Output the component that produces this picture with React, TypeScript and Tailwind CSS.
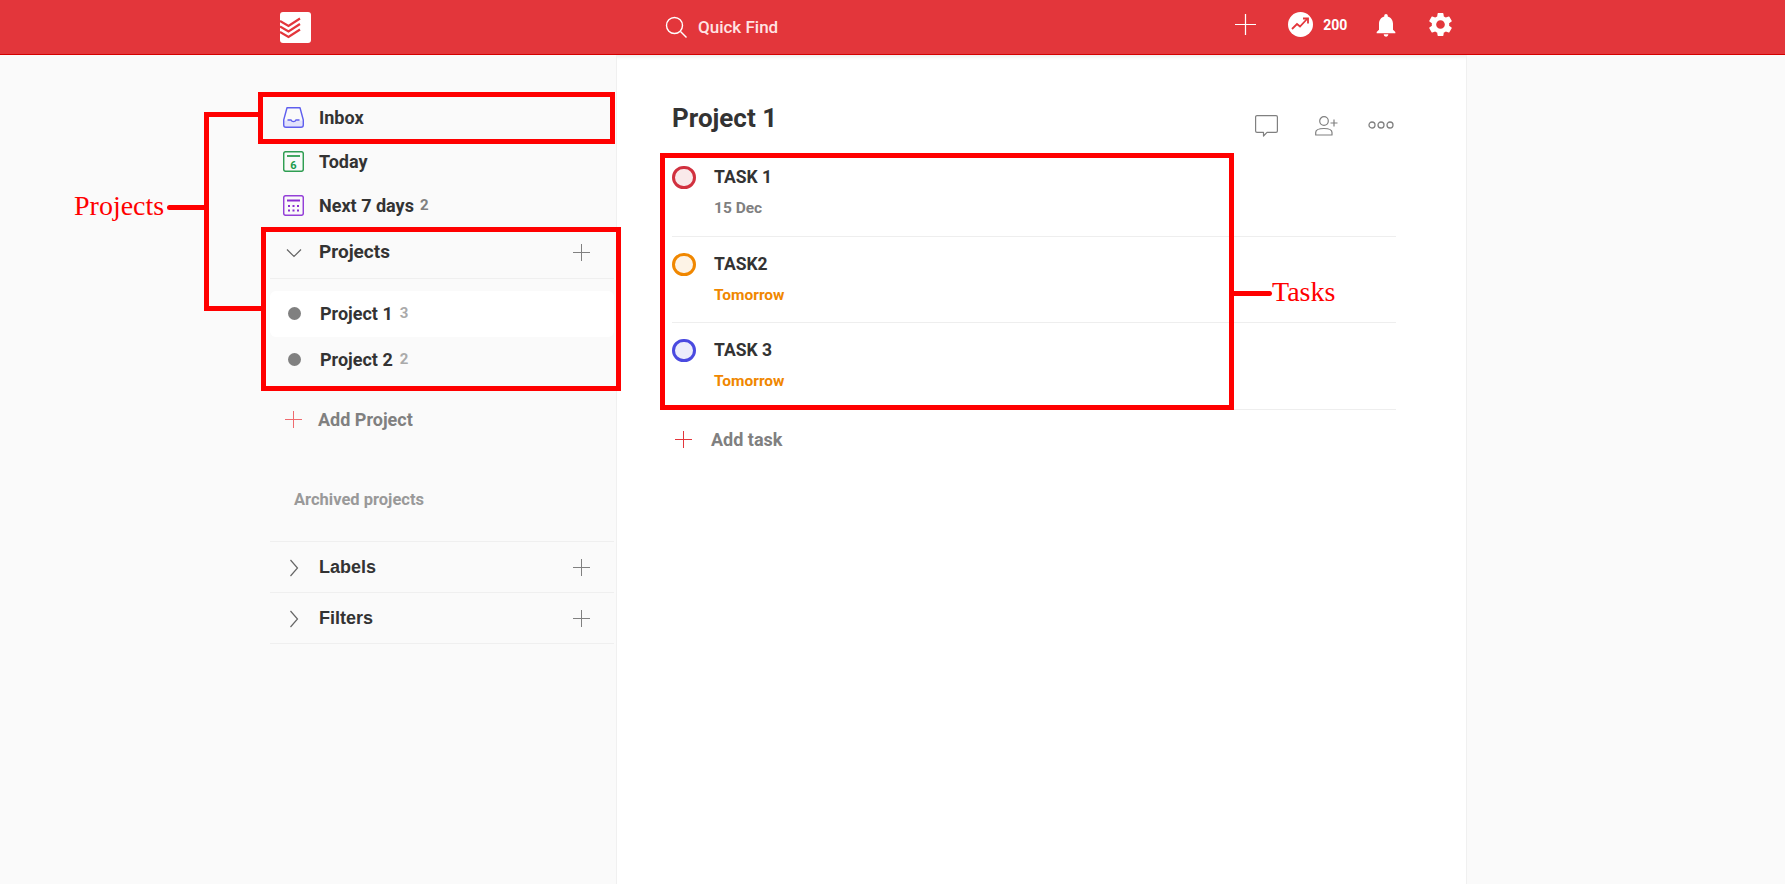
import React from 'react';
import { MdNotifications, MdSettings } from 'react-icons/md';

const Plus = ({ size = 17, color = '#808080' }: { size?: number; color?: string }) => (
  <svg width={size} height={size} viewBox="0 0 17 17" fill="none" stroke={color} strokeWidth="1">
    <path d="M8.5 0v17M0 8.5h17" />
  </svg>
);

const Chevron = ({ open }: { open?: boolean }) => (
  <svg width="18" height="18" viewBox="0 0 18 18" fill="none" stroke="#666" strokeWidth="1.2">
    {open ? <path d="M2 5.5l7 7 7-7" /> : <path d="M5.5 1l7 8-7 8" />}
  </svg>
);

const Logo = () => (
  <svg width="31" height="31" viewBox="0 0 31 31">
    <rect width="31" height="31" rx="3" fill="#fff" />
    <g fill="none" stroke="#e3363b" strokeWidth="2.2">
      <path d="M0 9l8.5 5L20 6.500" />
      <path d="M0 14.500l8.5 5L20 12" />
      <path d="M0 20l8.5 5L20 17.500" />
    </g>
  </svg>
);

const InboxIcon = () => (
  <svg width="21" height="21" viewBox="0 0 21 21" fill="none">
    <path d="M0.7 13.5h19.6v4.5a2.3 2.3 0 0 1-2.3 2.3H3a2.3 2.3 0 0 1-2.3-2.3z" fill="#e2e2fb" />
    <path d="M4 0.7h13l3.3 12.3v5a2.3 2.3 0 0 1-2.3 2.3H3a2.3 2.3 0 0 1-2.3-2.3v-5z" stroke="#5f5fee" strokeWidth="1.400" strokeLinejoin="round" />
    <path d="M4.500 13h3.500c1 2.200 4 2.200 5 0h3.500" stroke="#5f5fee" strokeWidth="1.400" />
  </svg>
);

const TodayIcon = () => (
  <svg width="21" height="21" viewBox="0 0 21 21" fill="none">
    <rect x="0.7" y="0.7" width="19.600" height="19.600" rx="2" stroke="#2f9e52" strokeWidth="1.500" />
    <path d="M4 5h13" stroke="#2f9e52" strokeWidth="1.800" />
    <text x="10.500" y="17.500" textAnchor="middle" fontSize="11" fontWeight="700" fontFamily="Roboto" fill="#1a9a4a">6</text>
  </svg>
);

const WeekIcon = () => (
  <svg width="21" height="21" viewBox="0 0 21 21" fill="none">
    <rect x="0.7" y="0.7" width="19.600" height="19.600" rx="2" stroke="#9440d8" strokeWidth="1.500" />
    <path d="M4 5.500h13" stroke="#8a2fd0" strokeWidth="2" />
    <g fill="#8a2fd0">
      {[5, 9.500, 14].map((x) => [10, 14.500].map((y) => <rect key={`${x}-${y}`} x={x} y={y} width="2" height="2" />))}
    </g>
  </svg>
);

const NavRow = ({ icon, label, count }: { icon: React.ReactNode; label: string; count?: number }) => (
  <div className="flex h-[44px] items-center pl-[283px]">
    <span className="flex w-[36px]">{icon}</span>
    <span className="text-[18px] font-bold text-[#333]">{label}</span>
    {count !== undefined && <span className="ml-[6px] text-[15px] font-bold text-[#808080]">{count}</span>}
  </div>
);

const ProjectRow = ({ label, count, active }: { label: string; count: number; active?: boolean }) => (
  <div className={`flex h-[46px] items-center rounded-md pb-[2px] pl-[18px] ${active ? 'bg-white' : ''}`}>
    <span className="h-[13px] w-[13px] rounded-full bg-[#808080]" />
    <span className="ml-[19px] text-[18px] font-bold text-[#333]">{label}</span>
    <span className="ml-[7px] text-[15px] font-bold text-[#aaa]">{count}</span>
  </div>
);

const FoldRow = ({ label }: { label: string }) => (
  <div className="flex h-[51px] items-center border-b border-[#efefef] pl-[15px] pr-[24px] pt-[2px] font-['Liberation_Sans',sans-serif]">
    <span className="flex w-[34px]"><Chevron /></span>
    <span className="flex-1 text-[18px] font-bold text-[#333]">{label}</span>
    <Plus />
  </div>
);

const Task = ({ name, date, dateColor, ring, fill }: { name: string; date: string; dateColor: string; ring: string; fill: string }) => (
  <div className="h-[86.500px] border-b border-[#eee] pt-[17px]">
    <div className="flex items-start">
      <span className="-mt-[1px] h-[23px] w-[24px] rounded-full border-[3px]" style={{ borderColor: ring, backgroundColor: fill }} />
      <div className="ml-[18px]">
        <div className="text-[17.500px] leading-[21px] font-bold text-[#333]">{name}</div>
        <div className="mt-[10px] text-[15.500px] leading-[21px] font-bold" style={{ color: dateColor }}>{date}</div>
      </div>
    </div>
  </div>
);

export default function App() {
  return (
    <div className="relative h-[884px] overflow-hidden bg-white font-[Roboto,sans-serif]">
      {/* Top bar */}
      <header className="flex h-[55px] items-center border-b border-[#d40000] bg-[#e3363b] text-white shadow-[0_2px_4px_rgba(0,0,0,0.08)]">
        <div className="ml-[280px]"><Logo /></div>
        <svg className="ml-[354px]" width="22" height="22" viewBox="0 0 22 22" fill="none" stroke="#fff" strokeWidth="1.400">
          <circle cx="9.500" cy="9.500" r="8" />
          <path d="M15.500 15.500l6 6" />
        </svg>
        <span className="ml-[11px] mt-[1px] text-[17px] font-medium text-[#ffe3e3]">Quick Find</span>
        <div className="mb-[5px] ml-[457px]"><Plus size={21} color="#fff" /></div>
        <svg className="mb-[5px] ml-[32px]" width="25" height="25" viewBox="0 0 25 25" fill="none">
          <circle cx="12.500" cy="12.500" r="12.500" fill="#fff" />
          <path d="M4 17l5-5 3 2.500 7-7.500" stroke="#e3363b" strokeWidth="1.800" />
          <path d="M15 6.500h5v5" stroke="#e3363b" strokeWidth="1.800" />
        </svg>
        <span className="mb-[3px] ml-[10px] text-[14px] font-bold">200</span>
        <MdNotifications className="mb-[5px] ml-[25px]" size={28} />
        <MdSettings className="mb-[5px] ml-[26px]" size={29} />
      </header>

      <div className="flex h-[829px]">
        {/* Sidebar */}
        <aside className="w-[617px] border-r border-[#f0f0f0] bg-[#fafafa] pt-[40px]">
          <NavRow icon={<InboxIcon />} label="Inbox" />
          <NavRow icon={<TodayIcon />} label="Today" />
          <NavRow icon={<WeekIcon />} label="Next 7 days" count={2} />
          <div className="ml-[270px] w-[344px]">
            <div className="flex h-[52px] items-center border-b border-[#efefef] pl-[15px] pr-[24px]">
              <span className="flex w-[34px]"><Chevron open /></span>
              <span className="flex-1 text-[19px] font-bold text-[#333]">Projects</span>
              <Plus />
            </div>
            <div className="pt-[12px]">
              <ProjectRow label="Project 1" count={3} active />
              <ProjectRow label="Project 2" count={2} />
            </div>
            <div className="mt-[13px] flex h-[46px] items-center pl-[15px]">
              <Plus color="#ef6a6e" />
              <span className="ml-[16px] text-[18px] font-bold text-[#808080]">Add Project</span>
            </div>
            <div className="mt-[46px] pl-[24px] text-[16.500px] font-bold text-[#999]">Archived projects</div>
            <div className="mt-[28px] border-t border-[#efefef]">
              <FoldRow label="Labels" />
              <FoldRow label="Filters" />
            </div>
          </div>
        </aside>

        {/* Task list */}
        <main className="w-[850px] border-r border-[#f0f0f0] pl-[55px] pr-[70px] pt-[40px]">
          <div className="flex h-[55px] items-start">
            <h1 className="flex-1 text-[26px] leading-[46px] font-bold text-[#333]">Project 1</h1>
            <div className="mr-[2px] mt-[20px] flex items-start">
              <svg width="23" height="22" viewBox="0 0 23 22" fill="none" stroke="#808080" strokeWidth="1.200">
                <path d="M2 .6h19a1.400 1.400 0 0 1 1.400 1.400v14a1.400 1.400 0 0 1-1.400 1.400h-9L8.500 21v-3.600H2A1.400 1.400 0 0 1 .6 16V2A1.400 1.400 0 0 1 2 .6z" strokeLinejoin="round" />
              </svg>
              <svg className="ml-[37px] mt-[1px]" width="23" height="20" viewBox="0 0 23 20" fill="none" stroke="#808080" strokeWidth="1.200">
                <circle cx="9" cy="5" r="4.300" />
                <path d="M.7 19v-2.500c0-2.500 3.500-4 8.300-4s8 1.500 8 4V19z" strokeLinejoin="round" />
                <path d="M19 3.500v7M15.500 7h7" />
              </svg>
              <svg className="ml-[30px] mt-[6px]" width="26" height="8" viewBox="0 0 26 8" fill="none" stroke="#808080" strokeWidth="1.300">
                <circle cx="4" cy="4" r="3" />
                <circle cx="13" cy="4" r="3" />
                <circle cx="22" cy="4" r="3" />
              </svg>
            </div>
          </div>
          <Task name="TASK 1" date="15 Dec" dateColor="#808080" ring="#d1313f" fill="#f9e9ea" />
          <Task name="TASK2" date="Tomorrow" dateColor="#f08700" ring="#f08700" fill="#fdf3e6" />
          <Task name="TASK 3" date="Tomorrow" dateColor="#f08700" ring="#4a4ae0" fill="#ecedfb" />
          <div className="flex h-[60px] items-center pl-[3px]">
            <Plus color="#e3363b" />
            <span className="ml-[19px] text-[18px] font-bold text-[#808080]">Add task</span>
          </div>
        </main>
        <div className="flex-1 bg-[#fafafa]" />
      </div>

      {/* Red annotations drawn over the screenshot */}
      <div className="absolute left-[258px] top-[92px] h-[52px] w-[357px] border-[5px] border-[#f00]" />
      <div className="absolute left-[261px] top-[227px] h-[164px] w-[360px] border-[5px] border-[#f00]" />
      <div className="absolute left-[660px] top-[153px] h-[257px] w-[574px] border-[5px] border-[#f00]" />
      <div className="absolute left-[204px] top-[112px] h-[199px] w-[58px] border-y-[5px] border-l-[5px] border-[#f00]" />
      <div className="absolute left-[167px] top-[205px] h-[5px] w-[40px] rounded-full bg-[#f00]" />
      <div className="absolute left-[1232px] top-[291px] h-[5px] w-[40px] rounded-full bg-[#f00]" />
      <span className="absolute left-[74px] top-[188px] font-['Liberation_Serif',serif] text-[28px] leading-[36px] text-[#f00]">Projects</span>
      <span className="absolute left-[1272px] top-[274px] font-['Liberation_Serif',serif] text-[28px] leading-[36px] text-[#f00]">Tasks</span>
    </div>
  );
}
